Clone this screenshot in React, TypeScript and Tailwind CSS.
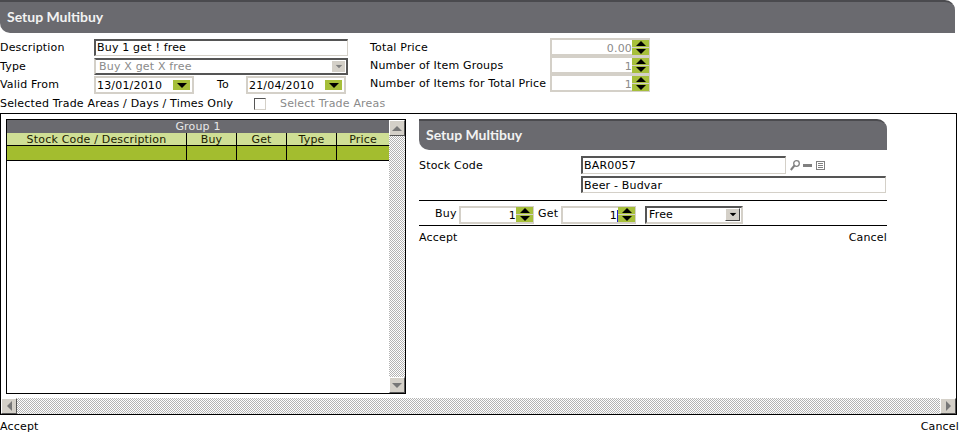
import { ReactNode } from 'react';

const dither = 'bg-[repeating-conic-gradient(#b4b4b4_0%_25%,#ffffff_0%_50%)] bg-size-[2px_2px]';

function Title({ children, className }: { children: ReactNode; className: string }) {
  return (
    <div className={`bg-[#6a6a6f] border-t-2 border-[#4a4a4e] rounded-tr-[10px] rounded-bl-[10px] text-[#f2f2f2] font-bold text-[14px] tracking-normal flex items-center pl-[7px] pb-[3px] font-['Lato',sans-serif] ${className}`}>
      {children}
    </div>
  );
}

function TextBox({ value, className, muted }: { value: string; className: string; muted?: boolean }) {
  return (
    <div className={`border border-[#d4d0c8] border-t-2 border-l-2 border-t-[#555] border-l-[#555] bg-white pl-[1px] flex items-center leading-none ${muted ? 'text-[#8a8a8a]' : ''} ${className}`}>
      {value}
    </div>
  );
}

function Arrow({ dir, className }: { dir: 'up' | 'down' | 'left' | 'right'; className: string }) {
  const pts = { up: '0,5 5,0 10,5', down: '0,0 10,0 5,5', left: '5,0 5,10 0,5', right: '0,0 0,10 5,5' }[dir];
  const size = dir === 'up' || dir === 'down' ? 'w-[10px] h-[5px]' : 'w-[5px] h-[10px]';
  return (
    <svg viewBox={dir === 'up' || dir === 'down' ? '0 0 10 5' : '0 0 5 10'} className={`${size} ${className}`}>
      <polygon points={pts} fill="currentColor" />
    </svg>
  );
}

function Spinner() {
  return (
    <div className="w-[18px] self-stretch bg-[#d4d0c8] flex flex-col justify-center gap-[1px] pr-[1px]">
      <div className="h-[7px] bg-[#a6bf3a] flex items-center justify-center"><Arrow dir="up" className="text-black" /></div>
      <div className="h-[7px] bg-[#a6bf3a] flex items-center justify-center"><Arrow dir="down" className="text-black" /></div>
    </div>
  );
}

function NumberBox({ value, muted, caret, className }: { value: string; muted?: boolean; caret?: boolean; className: string }) {
  return (
    <div className={`flex h-[18px] ${className}`}>
      <div className={`flex-1 bg-white border-2 border-r-0 border-[#d4d0c8] flex items-center justify-end pt-[2px] leading-none ${muted ? 'text-[#8a8a8a]' : ''}`}>
        {value}
        {caret && <span className="w-[1px] h-[12px] bg-[#2222cc]" />}
      </div>
      <Spinner />
    </div>
  );
}

function DateBox({ value }: { value: string }) {
  return (
    <div className="w-[100px] h-[18px] shrink-0 border-2 border-[#d4d0c8] bg-white flex items-center justify-between px-[1px]">
      <span className="pt-[2px]">{value}</span>
      <div className="w-[17px] h-[10px] mr-[1px] bg-[#a6bf3a] flex items-center justify-center"><Arrow dir="down" className="text-black" /></div>
    </div>
  );
}

function ScrollButton({ dir }: { dir: 'up' | 'down' | 'left' | 'right' }) {
  return (
    <div className="w-[16px] h-[16px] shrink-0 bg-[#d4d0c8] border border-white border-r-[#555] border-b-[#555] flex items-center justify-center">
      <Arrow dir={dir} className="text-[#777]" />
    </div>
  );
}

const columns = [
  { name: 'Stock Code / Description', w: 'w-[180px]' },
  { name: 'Buy', w: 'w-[50px]' },
  { name: 'Get', w: 'w-[50px]' },
  { name: 'Type', w: 'w-[50px]' },
  { name: 'Price', w: 'flex-1' },
];

export default function App() {
  return (
    <div className="w-[959px] h-[432px] bg-white text-[11px] tracking-[0.18px] text-black overflow-hidden font-['DejaVu_Sans',sans-serif]">
      <Title className="w-[955px] h-[33px]">Setup Multibuy</Title>

      <div className="h-[80px] flex pt-[5px]">
        <div className="w-[370px] shrink-0">
          <div className="flex items-center h-[18px]">
            <span className="w-[94px] pt-[2px]">Description</span>
            <TextBox value="Buy 1 get ! free" className="w-[254px] h-[17px]" />
          </div>
          <div className="flex items-center h-[18px] mt-[1px]">
            <span className="w-[94px] pt-[2px]">Type</span>
            <div className="w-[254px] h-[17px] border-2 border-[#d4d0c8] border-t-[#555] border-r-[#555] border-b-[#555] flex items-center justify-between pl-[3px] text-[#8a8a8a]">
              <span className="pt-[2px]">Buy X get X free</span>
              <div className="w-[15px] h-[13px] bg-[#d4d0c8] border border-white flex items-center justify-center"><Arrow dir="down" className="text-[#808080] scale-[0.7]" /></div>
            </div>
          </div>
          <div className="flex items-center h-[18px] mt-[1px]">
            <span className="w-[94px]">Valid From</span>
            <DateBox value="13/01/2010" />
            <span className="w-[52px] pl-[23px]">To</span>
            <DateBox value="21/04/2010" />
          </div>
          <div className="flex items-center h-[18px] whitespace-nowrap mt-[1px]">
            <span className="w-[254px] shrink-0">Selected Trade Areas / Days / Times Only</span>
            <div className="w-[12px] h-[12px] shrink-0 border border-[#d4d0c8] border-t-[#555] border-l-[#555] bg-white" />
            <span className="ml-[14px] text-[#8a8a8a]">Select Trade Areas</span>
          </div>
        </div>
        <div className="w-[280px]">
          <div className="flex items-center h-[18px]">
            <span className="w-[180px] pt-[2px]">Total Price</span>
            <NumberBox value="0.00" muted className="w-[100px]" />
          </div>
          <div className="flex items-center h-[18px]">
            <span className="w-[180px] pt-[2px]">Number of Item Groups</span>
            <NumberBox value="1" muted className="w-[100px]" />
          </div>
          <div className="flex items-center h-[18px]">
            <span className="w-[180px] pt-[2px] whitespace-nowrap">Number of Items for Total Price</span>
            <NumberBox value="1" muted className="w-[100px]" />
          </div>
        </div>
      </div>

      <div className="w-[957px] h-[302px] border border-black flex flex-col">
        <div className="flex-1 flex pt-[5px] pl-[5px]">
          <div className="w-[400px] h-[275px] border border-black flex">
            <div className="flex-1 flex flex-col">
              <div className="h-[13px] bg-[#6a6a6f] text-center leading-[13px] text-[#e8e8e8]">Group 1</div>
              <div className="h-[13px] bg-[#cfdf95] border-b border-black flex">
                {columns.map((c, i) => (
                  <div key={c.name} className={`${c.w} text-center leading-[13px] text-[#1c1c00] ${i < 4 ? 'border-r border-black' : ''}`}>{c.name}</div>
                ))}
              </div>
              <div className="h-[15px] bg-[#a3bd2f] border-b border-black flex">
                {columns.map((c, i) => (
                  <div key={c.name} className={`${c.w} ${i < 4 ? 'border-r border-black' : ''}`} />
                ))}
              </div>
            </div>
            <div className={`w-[16px] flex flex-col justify-between ${dither}`}>
              <ScrollButton dir="up" />
              <ScrollButton dir="down" />
            </div>
          </div>

          <div className="w-[468px] ml-[13px]">
            <Title className="w-[468px] h-[31px]">Setup Multibuy</Title>
            <div className="flex mt-[6px]">
              <span className="w-[162px] leading-[18px] pt-[1px]">Stock Code</span>
              <div>
                <div className="flex items-center">
                  <TextBox value="BAR0057" className="w-[205px] h-[18px]" />
                  <div className="flex items-center ml-[4px] text-[#808080] gap-[3px]">
                    <svg viewBox="0 0 10 11" className="w-[10px] h-[11px]" fill="none" stroke="currentColor">
                      <circle cx="6.5" cy="3.5" r="2.8" strokeWidth="1.3" />
                      <path d="M4.5 5.5 L0.8 10" strokeWidth="2" />
                    </svg>
                    <div className="w-[9px] h-[3px] bg-[#808080]" />
                    <svg viewBox="0 0 9 9" className="w-[9px] h-[9px] ml-[1px]" fill="none" stroke="currentColor">
                      <rect x="0.5" y="0.5" width="8" height="8" />
                      <path d="M2 2.5h5M2 4.5h5M2 6.5h5" />
                    </svg>
                  </div>
                </div>
                <TextBox value="Beer - Budvar" className="w-[305px] h-[17px] mt-[2px]" />
              </div>
            </div>
            <div className="border-t border-black mt-[7px] h-[25px] flex items-center pt-[3px]">
              <span className="w-[40px] pl-[16px] whitespace-nowrap">Buy</span>
              <NumberBox value="1" className="w-[75px]" />
              <span className="ml-[4px] w-[23px]">Get</span>
              <NumberBox value="1" caret className="w-[75px]" />
              <div className="ml-[9px] w-[98px] h-[18px] border-2 border-[#555] border-r-[#d4d0c8] border-b-[#d4d0c8] flex items-center justify-between pl-[2px]">
                <span className="pt-[1px]">Free</span>
                <div className="w-[15px] h-[13px] bg-[#d4d0c8] border border-white border-r-[#444] border-b-[#444] flex items-center justify-center mr-[1px]"><Arrow dir="down" className="text-black scale-[0.7]" /></div>
              </div>
            </div>
            <div className="border-t border-black flex justify-between pt-[4px]">
              <span>Accept</span>
              <span>Cancel</span>
            </div>
          </div>
        </div>
        <div className={`h-[16px] flex justify-between ${dither}`}>
          <ScrollButton dir="left" />
          <ScrollButton dir="right" />
        </div>
      </div>

      <div className="flex justify-between h-[17px] items-center pt-[5px] leading-none">
        <span>Accept</span>
        <span>Cancel</span>
      </div>
    </div>
  );
}
